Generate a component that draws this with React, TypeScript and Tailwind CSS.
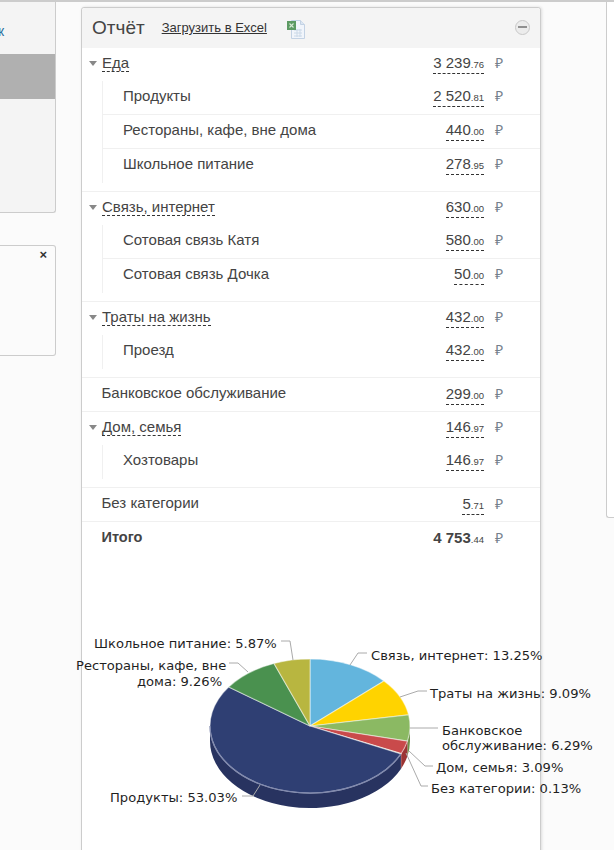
const groups = [
  {
    name: "Еда", whole: "3 239", cents: "76",
    items: [
      { name: "Продукты", whole: "2 520", cents: "81" },
      { name: "Рестораны, кафе, вне дома", whole: "440", cents: "00" },
      { name: "Школьное питание", whole: "278", cents: "95" }
    ]
  },
  {
    name: "Связь, интернет", whole: "630", cents: "00",
    items: [
      { name: "Сотовая связь Катя", whole: "580", cents: "00" },
      { name: "Сотовая связь Дочка", whole: "50", cents: "00" }
    ]
  },
  {
    name: "Траты на жизнь", whole: "432", cents: "00",
    items: [{ name: "Проезд", whole: "432", cents: "00" }]
  },
  { name: "Банковское обслуживание", whole: "299", cents: "00", items: [] },
  {
    name: "Дом, семья", whole: "146", cents: "97",
    items: [{ name: "Хозтовары", whole: "146", cents: "97" }]
  },
  { name: "Без категории", whole: "5", cents: "71", items: [] }
];

const slices = [
  { share: 13.25, color: "#63b5dd", wall: "" },
  { share: 9.09, color: "#ffd300", wall: "" },
  { share: 6.29, color: "#8bb963", wall: "#6c9149" },
  { share: 3.09, color: "#c94a4b", wall: "#9c3434" },
  { share: 0.13, color: "#d9d0a0", wall: "#9c3434" },
  { share: 53.03, color: "#2f3f73", wall: "#283360" },
  { share: 9.26, color: "#4a914f", wall: "" },
  { share: 5.87, color: "#b8b640", wall: "" }
];

const leaders = [
  "M281 641H290L293 660",
  "M229 663H238L248 672",
  "M242 796H253L260 785",
  "M367 653H358L350 665",
  "M427 691H418L400 697",
  "M438 728H410",
  "M433 766H425L409 751",
  "M428 786H421L406 753"
];

const labels = [
  { x: 94, y: 648, text: "Школьное питание: 5.87%" },
  { x: 76, y: 670, text: "Рестораны, кафе, вне" },
  { x: 137, y: 686, text: "дома: 9.26%" },
  { x: 110, y: 802, text: "Продукты: 53.03%" },
  { x: 371, y: 660, text: "Связь, интернет: 13.25%" },
  { x: 430, y: 698, text: "Траты на жизнь: 9.09%" },
  { x: 442, y: 735, text: "Банковское" },
  { x: 442, y: 750, text: "обслуживание: 6.29%" },
  { x: 436, y: 772, text: "Дом, семья: 3.09%" },
  { x: 431, y: 793, text: "Без категории: 0.13%" }
];

const cx = 310;
const cy = 726;
const rx = 100;
const ry = 67;
const depth = 15;

function pt(deg: number, dy = 0) {
  const a = (deg * Math.PI) / 180;
  return `${(cx + rx * Math.sin(a)).toFixed(2)} ${(cy - ry * Math.cos(a) + dy).toFixed(2)}`;
}

function wallPath(from: number, to: number) {
  const a = Math.max(from, 90);
  const b = Math.min(to, 270);
  if (a >= b) return "";
  return `M${pt(a)}A${rx} ${ry} 0 0 1 ${pt(b)}L${pt(b, depth)}A${rx} ${ry} 0 0 0 ${pt(a, depth)}Z`;
}

function PieChart() {
  let start = 0;
  const parts = slices.map((s) => {
    const from = start;
    const to = start + (s.share * 360) / 100;
    start = to;
    return { ...s, from, to };
  });

  return (
    <svg
      width="540"
      height="200"
      viewBox="60 620 540 200"
      className="ml-[-22px] mt-[68px] block overflow-visible"
    >
      {parts.map((p) =>
        p.wall ? <path key={p.from} d={wallPath(p.from, p.to)} fill={p.wall} /> : null
      )}
      {parts.map((p) => (
        <path
          key={p.from}
          d={`M${cx} ${cy}L${pt(p.from)}A${rx} ${ry} 0 ${p.to - p.from > 180 ? 1 : 0} 1 ${pt(p.to)}Z`}
          fill={p.color}
          stroke="#ffffff"
          strokeOpacity="0.45"
          strokeWidth="1.2"
          strokeLinejoin="round"
        />
      ))}
      <path
        d={`M${pt(114.7)}A${rx} ${ry} 0 0 1 ${pt(270)}`}
        fill="none"
        stroke="#8089ad"
        strokeWidth="1.3"
      />
      {leaders.map((d) => (
        <path key={d} d={d} fill="none" stroke="#aaaaaa" strokeWidth="1" />
      ))}
      {labels.map((l) => (
        <text key={l.text} x={l.x} y={l.y} fontSize="13.1" fill="#1f1f1f" fontFamily="'DejaVu Sans', sans-serif">
          {l.text}
        </text>
      ))}
    </svg>
  );
}

function Amount({ whole, cents, bold }: { whole: string; cents: string; bold?: boolean }) {
  return (
    <div className="ml-auto flex items-baseline">
      <span className={bold ? "leading-[17px] text-[#444]" : "border-b border-dashed border-[#333] leading-[17px]"}>
        <span className={bold ? "text-[15px] font-bold" : "text-[15px]"}>{whole}</span>
        <span className="text-[9.5px]">.{cents}</span>
      </span>
      <span className="ml-[11px] w-[45px] text-[14px] text-[#74808c]">₽</span>
    </div>
  );
}

function Arrow() {
  return <span className="mr-[5px] ml-[7px] h-0 w-0 border-x-[4px] border-t-[5px] border-x-transparent border-t-[#888]" />;
}

function ExcelIcon() {
  return (
    <svg width="19" height="19" viewBox="0 0 19 19" className="mt-[2px] ml-[20px]">
      <path d="M4.5 0.5H13.5L17.5 4.5V18.5H4.5Z" fill="#f1f5fb" stroke="#c3d2e4" />
      <path d="M13.5 0.5V4.5H17.5" fill="#dce6f2" stroke="#c3d2e4" />
      <path d="M7 10H15M7 13H15M7 16H15M10 9V17M13 9V17" stroke="#cbd9e8" />
      <rect x="0" y="1" width="9" height="9" fill="#5c9a63" />
      <path d="M2.5 3.5L6.5 7.5M6.5 3.5L2.5 7.5" stroke="#d5e8d6" strokeWidth="1.1" />
    </svg>
  );
}

export default function App() {
  return (
    <div className="h-[850px] w-[614px] overflow-hidden bg-[#fbfbfb] font-['Liberation_Sans',Arial,sans-serif] text-[#444]">
      <div className="h-[2px] bg-[#cccccc]" />
      <div className="flex items-start">
        <div className="w-[56px] shrink-0">
          <div className="h-[211px] rounded-br-[3px] border-r border-b border-[#cccccc] bg-[#f4f4f4]">
            <div className="h-[52px] pt-[20px] pl-0 text-[14px] leading-[18px] text-[#2a6f9e]">
              <span className="ml-[-2px]">к</span>
            </div>
            <div className="h-[45px] bg-[#b0b0b0]" />
          </div>
          <div className="mt-[32px] flex h-[111px] justify-end rounded-r-[3px] border-y border-r border-[#cccccc] pt-[1px] pr-[8px] text-[13px] leading-[16px] font-bold text-[#333]">
            ×
          </div>
        </div>

        <div className="mt-[5px] ml-[25px] h-[900px] w-[460px] shrink-0 rounded-t-[3px] border border-[#cccccc] bg-white shadow-[1px_0_3px_rgba(0,0,0,0.12)]">
          <div className="flex h-[40px] items-center rounded-t-[3px] bg-[#f4f4f4] pl-[10px]">
            <span className="text-[19px] leading-[22px]">Отчёт</span>
            <a className="ml-[17px] text-[13px] text-[#333] underline">Загрузить в Excel</a>
            <ExcelIcon />
            <span className="mr-[10px] mb-[2px] ml-auto flex h-[15px] w-[15px] items-center justify-center rounded-full border border-[#c8c8c8] bg-[#ececec]">
              <span className="h-[2px] w-[9px] bg-[#909090]" />
            </span>
          </div>

          {groups.map((g) => (
            <div key={g.name} className="border-b border-[#f0f0f0]">
              <div className={`flex h-[30px] text-[15px] ${g.items.length ? "items-center" : "mb-[3px] items-start pt-[6px]"}`}>
                {g.items.length ? <Arrow /> : <span className="w-[19.5px]" />}
                {g.items.length ? (
                  <span className="border-b border-dashed border-[#333] leading-[17px]">{g.name}</span>
                ) : (
                  <span className="leading-[17px]">{g.name}</span>
                )}
                <Amount whole={g.whole} cents={g.cents} />
              </div>
              {g.items.length > 0 && (
                <div className="mt-[3px] mb-[8px] ml-[20px] border-l border-[#f0f0f0]">
                  {g.items.map((it, i) => (
                    <div
                      key={it.name}
                      className={`flex h-[34px] items-center pb-[3px] pl-[20px] text-[15px] ${i < g.items.length - 1 ? "border-b border-[#f0f0f0]" : ""}`}
                    >
                      <span>{it.name}</span>
                      <Amount whole={it.whole} cents={it.cents} />
                    </div>
                  ))}
                </div>
              )}
            </div>
          ))}

          <div className="flex h-[30px] items-center pt-[2px] pl-[19.5px] text-[15px]">
            <span className="text-[14.5px] font-bold">Итого</span>
            <Amount whole="4 753" cents="44" bold />
          </div>

          <PieChart />
        </div>

        <div className="ml-[65px] h-[516px] grow rounded-bl-[3px] border-b border-l border-[#cccccc] bg-white" />
      </div>
    </div>
  );
}
